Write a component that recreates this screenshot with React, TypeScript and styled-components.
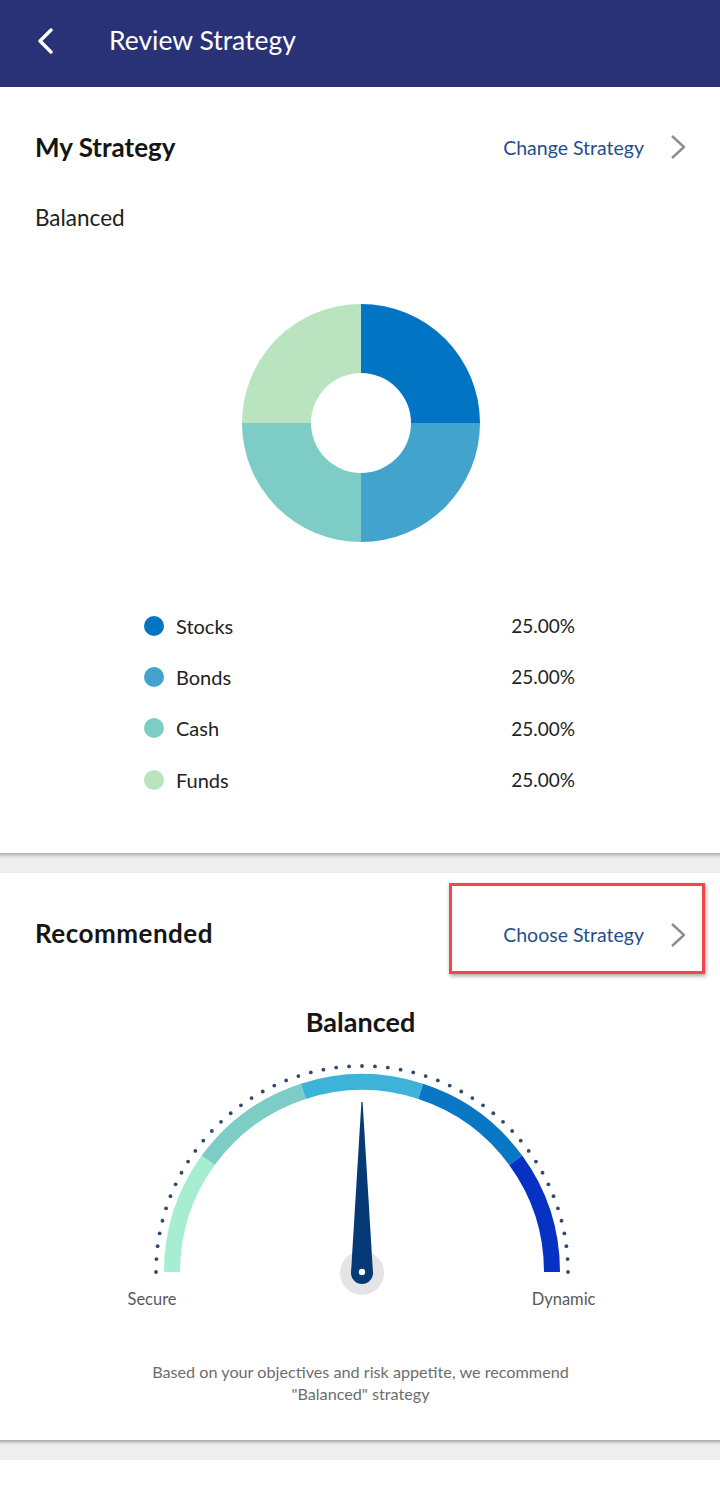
import React from 'react';
import styled, { createGlobalStyle } from 'styled-components';

const GlobalStyle = createGlobalStyle`
  body {
    margin: 0;
    background: #ffffff;
    font-family: Lato, "Open Sans", sans-serif;
    color: #1c1c1c;
  }
`;

const Page = styled.div`
  width: 720px;
  min-height: 1492px;
  background: #ffffff;
`;

const Header = styled.header`
  height: 87px;
  background: #2a3277;
  display: flex;
  align-items: center;
  padding-left: 36px;
  box-sizing: border-box;
`;

const BackButton = styled.button`
  width: 18px;
  height: 26px;
  padding: 0;
  border: 0;
  background: transparent;
  display: flex;
  align-items: center;
  justify-content: center;
  margin-top: -6px;
`;

const HeaderTitle = styled.h1`
  margin: 0 0 0 55px;
  font-size: 26.5px;
  font-weight: 400;
  color: #ffffff;
  margin-top: -7px;
`;

const Card = styled.section<{ $top: number; $bottom: number }>`
  padding: ${(p) => p.$top}px 34px ${(p) => p.$bottom}px 35px;
  background: #ffffff;
`;

const Band = styled.div`
  height: 20px;
  background: linear-gradient(#a9a9a9 0px, #c8c8c8 2px, #e6e6e6 4px, #efefef 6px, #efefef 100%);
`;

const CardHead = styled.div`
  height: 40px;
  display: flex;
  align-items: center;
  justify-content: space-between;
`;

const CardTitle = styled.h2<{ $wide?: boolean }>`
  margin: 0;
  font-size: 26px;
  font-weight: 700;
  color: #151515;
  letter-spacing: ${(p) => (p.$wide ? '0.5px' : '0')};
`;

const Link = styled.a<{ $marked?: boolean }>`
  position: relative;
  display: flex;
  align-items: center;
  gap: 26px;
  font-size: 19.5px;
  color: #1f4f8e;
  text-decoration: none;
  margin-top: ${(p) => (p.$marked ? '4px' : '0')};

  &::after {
    content: '';
    display: ${(p) => (p.$marked ? 'block' : 'none')};
    position: absolute;
    top: -39px;
    bottom: -26px;
    left: -54px;
    right: -19px;
    border: 3px solid #f44848;
    box-shadow: 1px 2px 4px rgba(0, 0, 0, 0.35);
  }
`;

const StrategyName = styled.div`
  margin-top: 36px;
  font-size: 22.5px;
  line-height: 30px;
  color: #202020;
`;

const ChartWrap = styled.div`
  margin-top: 70px;
  display: flex;
  justify-content: center;
  padding-left: 1px;
`;

const Legend = styled.ul`
  list-style: none;
  margin: 57px auto 0;
  padding: 0;
  width: 431px;
  transform: translateX(-1px);
`;

const LegendRow = styled.li`
  height: 51.3px;
  display: flex;
  align-items: center;
  font-size: 20px;
  color: #222222;
`;

const Swatch = styled.span<{ $color: string }>`
  width: 20px;
  height: 20px;
  border-radius: 50%;
  background: ${(p) => p.$color};
  margin-right: 12px;
`;

const LegendLabel = styled.span`
  flex: 1;
`;

const LegendValue = styled.span`
  font-size: 19px;
`;

const GaugeTitle = styled.h3`
  margin: 52px 0 0;
  text-align: center;
  font-size: 27px;
  line-height: 34px;
  font-weight: 700;
  color: #151515;
`;

const GaugeWrap = styled.div`
  margin-top: 23px;
  display: flex;
  justify-content: center;
  padding-left: 2px;
`;

const GaugeLabels = styled.div`
  width: 468px;
  margin: -1px auto 0;
  display: flex;
  justify-content: space-between;
  font-size: 16.5px;
  line-height: 20px;
  color: #5a5a5a;
  transform: translateX(1px);
`;

const Note = styled.p`
  margin: 52px auto 0;
  width: 470px;
  text-align: center;
  font-size: 16.2px;
  line-height: 22px;
  color: #6d6d6d;
`;

const ChevronRight = () => (
  <svg width="16" height="26" viewBox="0 0 16 26">
    <polyline points="2,2 14,13 2,24" fill="none" stroke="#8e8e8e" strokeWidth="2.4" strokeLinejoin="round" />
  </svg>
);

const slices = [
  { label: 'Stocks', value: 25, color: '#0274c4' },
  { label: 'Bonds', value: 25, color: '#42a3cc' },
  { label: 'Cash', value: 25, color: '#7dcdc6' },
  { label: 'Funds', value: 25, color: '#b9e4bf' },
];

const polar = (cx: number, cy: number, r: number, deg: number) => {
  const a = (deg * Math.PI) / 180;
  return [cx + r * Math.cos(a), cy - r * Math.sin(a)];
};

const Donut = () => {
  const c = 120;
  const ro = 119;
  const ri = 50;
  let start = 0;
  return (
    <svg width="240" height="240" viewBox="0 0 240 240">
      {slices.map((s) => {
        // clockwise from 12 o'clock
        const a0 = (start / 100) * 2 * Math.PI;
        start += s.value;
        const a1 = (start / 100) * 2 * Math.PI;
        const p = (r: number, a: number) => `${c + r * Math.sin(a)} ${c - r * Math.cos(a)}`;
        const large = a1 - a0 > Math.PI ? 1 : 0;
        const d = `M ${p(ro, a0)} A ${ro} ${ro} 0 ${large} 1 ${p(ro, a1)} L ${p(ri, a1)} A ${ri} ${ri} 0 ${large} 0 ${p(ri, a0)} Z`;
        return <path key={s.label} d={d} fill={s.color} />;
      })}
    </svg>
  );
};

const gaugeColors = ['#a6edd1', '#7ccdc6', '#3db3da', '#0a77c5', '#0631c2'];

const Gauge = () => {
  const cx = 220;
  const cy = 210;
  const r = 190;
  const dots = Array.from({ length: 51 }, (_, i) => polar(cx, cy, 206, 180 - i * 3.6));
  return (
    <svg width="440" height="228" viewBox="0 0 440 228" style={{ overflow: 'visible' }}>
      {dots.map(([x, y], i) => (
        <circle key={i} cx={x} cy={y} r="1.9" fill="#2e4a6d" />
      ))}
      {gaugeColors.map((col, i) => {
        const [x0, y0] = polar(cx, cy, r, 180 - i * 36);
        const [x1, y1] = polar(cx, cy, r, 180 - (i + 1) * 36);
        return (
          <path
            key={col}
            d={`M ${x0} ${y0} A ${r} ${r} 0 0 1 ${x1} ${y1}`}
            fill="none"
            stroke={col}
            strokeWidth="16"
          />
        );
      })}
      <circle cx={cx} cy={cy + 1} r="22" fill="#e4e4e4" />
      <path d={`M ${cx - 0.6} 40 L ${cx + 0.6} 40 L ${cx + 11} ${cy + 1} L ${cx - 11} ${cy + 1} Z`} fill="#063a76" />
      <circle cx={cx} cy={cy + 1} r="11" fill="#063a76" />
      <circle cx={cx} cy={cy} r="3.2" fill="#ffffff" />
    </svg>
  );
};

export default function App() {
  return (
    <>
      <GlobalStyle />
      <Page>
        <Header>
          <BackButton aria-label="Back">
            <svg width="18" height="26" viewBox="0 0 18 26">
              <polyline points="15,2 4,13 15,24" fill="none" stroke="#ffffff" strokeWidth="3.4" strokeLinecap="round" strokeLinejoin="round" />
            </svg>
          </BackButton>
          <HeaderTitle>Review Strategy</HeaderTitle>
        </Header>

        <Card $top={40} $bottom={47.8}>
          <CardHead>
            <CardTitle>My Strategy</CardTitle>
            <Link href="#">
              Change Strategy
              <ChevronRight />
            </Link>
          </CardHead>
          <StrategyName>Balanced</StrategyName>
          <ChartWrap>
            <Donut />
          </ChartWrap>
          <Legend>
            {slices.map((s) => (
              <LegendRow key={s.label}>
                <Swatch $color={s.color} />
                <LegendLabel>{s.label}</LegendLabel>
                <LegendValue>{s.value.toFixed(2)}%</LegendValue>
              </LegendRow>
            ))}
          </Legend>
        </Card>
        <Band />

        <Card $top={40} $bottom={35}>
          <CardHead>
            <CardTitle $wide>Recommended</CardTitle>
            <Link href="#" $marked>
              Choose Strategy
              <ChevronRight />
            </Link>
          </CardHead>
          <GaugeTitle>Balanced</GaugeTitle>
          <GaugeWrap>
            <Gauge />
          </GaugeWrap>
          <GaugeLabels>
            <span>Secure</span>
            <span>Dynamic</span>
          </GaugeLabels>
          <Note>
            Based on your objectives and risk appetite, we recommend "Balanced" strategy
          </Note>
        </Card>
        <Band />
      </Page>
    </>
  );
}
